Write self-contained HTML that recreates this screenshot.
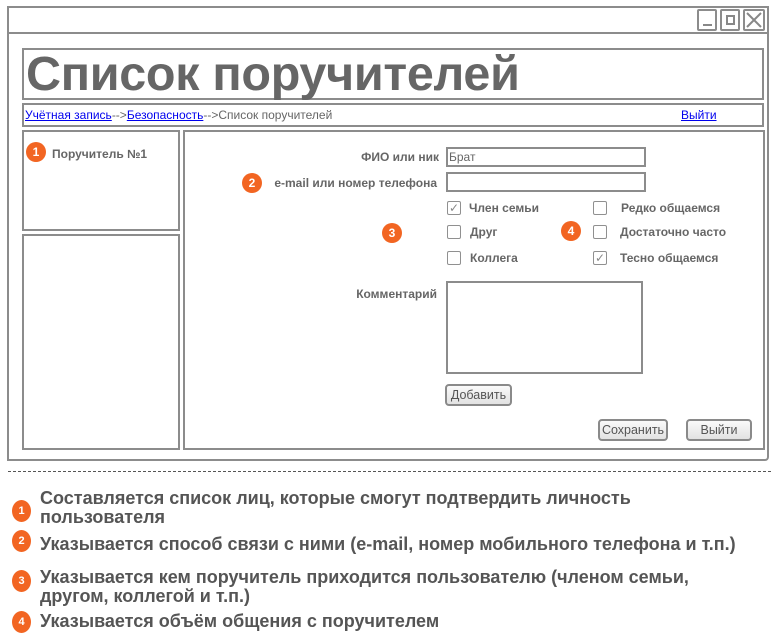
<!DOCTYPE html>
<html><head><meta charset="utf-8"><style>
*{margin:0;padding:0;box-sizing:border-box}
body{width:774px;height:641px;background:#fff;position:relative;overflow:hidden;font-family:"Liberation Sans",Arial,sans-serif;color:#666}
.a{position:absolute}
.bx{position:absolute;border:2px solid #8c8c8c;background:#fff}
.lb{position:absolute;font-size:12px;font-weight:bold;color:#666;white-space:nowrap;line-height:13px}
.bd{position:absolute;width:20px;height:20px;border-radius:50%;background:#f26522;color:#fff;font-weight:bold;font-size:12px;text-align:center;line-height:20px}
.cb{position:absolute;width:14px;height:14px;border:1.5px solid #909090;border-radius:2px;background:#fff;color:#888;font-size:12px;line-height:12px;text-align:center}
.btn{position:absolute;border:2px solid #8a8a8a;border-radius:4px;background:linear-gradient(#fafafa,#e2e2e2);font-size:12.5px;color:#555;text-align:center}
.bt{position:absolute;left:40px;font-size:18px;font-weight:bold;color:#555;line-height:19px;white-space:nowrap}
.sb{position:absolute;left:12px;width:19px;height:22px;border-radius:50%;background:#f26522;color:#fff;font-size:11px;font-weight:bold;text-align:center;line-height:22px}
a{color:#0000ee}
</style></head><body>
<div class="bx" style="left:7px;top:6px;width:762px;height:455px;border-radius:0 0 4px 0"></div>
<div class="a" style="left:8px;top:32px;width:760px;height:2px;background:#8c8c8c"></div>
<div class="bx" style="left:697px;top:9px;width:20px;height:22px;border-radius:2px"><div class="a" style="left:4px;top:13px;width:9px;height:2px;background:#888"></div></div>
<div class="bx" style="left:720px;top:9px;width:20px;height:22px;border-radius:2px"><div class="a" style="left:4px;top:4px;width:9px;height:10px;border:2px solid #888"></div></div>
<div class="bx" style="left:743px;top:9px;width:22px;height:22px;border-radius:2px"><svg class="a" style="left:1px;top:1px" width="16" height="16"><path d="M1 1L15 15M15 1L1 15" stroke="#888" stroke-width="2"/></svg></div>

<div class="bx" style="left:22px;top:48px;width:742px;height:52px"></div>
<div class="a" style="left:26px;top:45px;font-size:48.5px;font-weight:bold;color:#666;line-height:58px;white-space:nowrap;letter-spacing:-0.3px">Список поручителей</div>

<div class="bx" style="left:22px;top:103px;width:742px;height:24px"></div>
<div class="a" style="left:25px;top:108px;font-size:12px;line-height:14px;color:#666;white-space:nowrap"><a href="#">Учётная запись</a>--&gt;<a href="#">Безопасность</a>--&gt;Список поручителей</div>
<div class="a" style="left:681px;top:108px;font-size:12px;line-height:14px"><a href="#">Выйти</a></div>

<div class="bx" style="left:22px;top:130px;width:158px;height:101px"></div>
<div class="bd" style="left:26px;top:142px">1</div>
<div class="lb" style="left:52px;top:148px">Поручитель №1</div>
<div class="bx" style="left:22px;top:234px;width:158px;height:216px"></div>

<div class="bx" style="left:183px;top:130px;width:582px;height:320px"></div>
<div class="lb" style="left:300px;top:151px;width:139px;text-align:right">ФИО или ник</div>
<div class="bx" style="left:446px;top:147px;width:200px;height:20px;font-size:12px;line-height:16px;padding-left:1px;color:#666">Брат</div>
<div class="bd" style="left:242px;top:173px">2</div>
<div class="lb" style="left:260px;top:177px;width:177px;text-align:right">e-mail или номер телефона</div>
<div class="bx" style="left:446px;top:172px;width:200px;height:20px"></div>

<div class="cb" style="left:447px;top:201px">✓</div><div class="lb" style="left:469px;top:202px">Член семьи</div>
<div class="cb" style="left:447px;top:225px"></div><div class="lb" style="left:470px;top:226px">Друг</div>
<div class="cb" style="left:447px;top:251px"></div><div class="lb" style="left:470px;top:252px">Коллега</div>
<div class="bd" style="left:382px;top:223px">3</div>
<div class="bd" style="left:561px;top:221px">4</div>
<div class="cb" style="left:593px;top:201px"></div><div class="lb" style="left:621px;top:202px">Редко общаемся</div>
<div class="cb" style="left:593px;top:225px"></div><div class="lb" style="left:620px;top:226px">Достаточно часто</div>
<div class="cb" style="left:593px;top:251px">✓</div><div class="lb" style="left:620px;top:252px">Тесно общаемся</div>

<div class="lb" style="left:330px;top:288px;width:107px;text-align:right">Комментарий</div>
<div class="bx" style="left:446px;top:281px;width:197px;height:93px"></div>
<div class="btn" style="left:445px;top:384px;width:67px;height:22px;line-height:18px">Добавить</div>
<div class="btn" style="left:598px;top:419px;width:70px;height:22px;line-height:18px">Сохранить</div>
<div class="btn" style="left:686px;top:419px;width:66px;height:22px;line-height:18px">Выйти</div>

<div class="a" style="left:8px;top:471px;width:763px;border-top:1px dashed #555"></div>

<div class="sb" style="top:500px">1</div>
<div class="bt" style="top:489px">Составляется список лиц, которые смогут подтвердить личность<br>пользователя</div>
<div class="sb" style="top:530px">2</div>
<div class="bt" style="top:535px">Указывается способ связи с ними (e-mail, номер мобильного телефона и т.п.)</div>
<div class="sb" style="top:570px">3</div>
<div class="bt" style="top:568px">Указывается кем поручитель приходится пользователю (членом семьи,<br>другом, коллегой и т.п.)</div>
<div class="sb" style="top:611px">4</div>
<div class="bt" style="top:612px">Указывается объём общения с поручителем</div>
</body></html>
